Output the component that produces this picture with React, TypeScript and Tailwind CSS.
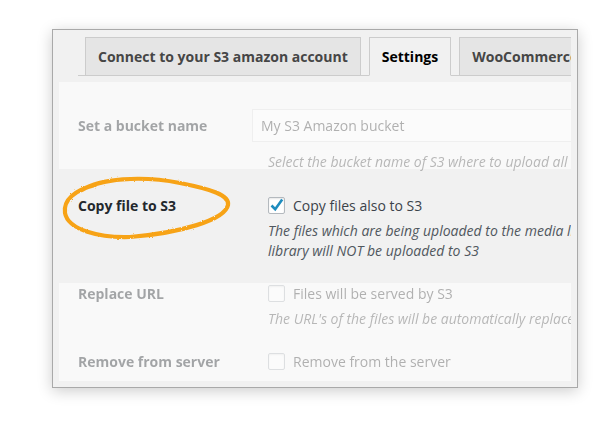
import React from 'react';

function Box({ checked }: { checked?: boolean }) {
  return (
    <span className="relative flex h-[17px] w-[17px] shrink-0 items-center justify-center rounded-[2px] border border-[#b4b9be] bg-white shadow-[inset_0_1px_2px_rgba(0,0,0,0.1)]">
      {checked && (
        <svg viewBox="0 0 17 17" className="absolute -left-px -top-px h-[17px] w-[17px]" fill="none">
          <path d="M3.5 8.5 L7.2 12.2 L14.2 2.6" stroke="#1e8cbe" strokeWidth="2.6" strokeLinejoin="miter" />
        </svg>
      )}
    </span>
  );
}

function Tab({ label, active }: { label: string; active?: boolean }) {
  return (
    <div
      className={
        'flex h-[39px] shrink-0 items-center border px-[12px] text-[14px] font-bold -mb-px ' +
        (active ? 'border-[#ccc] border-b-[#f1f1f1] bg-[#f1f1f1] text-black' : 'border-[#ccc] bg-[#e5e5e5] text-[#464646]')
      }
    >
      {label}
    </div>
  );
}

export default function App() {
  return (
    <div className="relative h-[429px] w-[600px] overflow-hidden bg-white pl-[52px] pt-[29px] font-['Open_Sans',sans-serif]">
      <div className="h-[359px] w-[526px] border border-[#a9a9a9] bg-[#f1f1f1] pb-[5px] pl-[6px] pr-[5px] shadow-[0_3px_14px_rgba(0,0,0,0.2)]">
        <div className="h-[351px] w-[512px] overflow-hidden">
          {/* tabs */}
          <div className="ml-[19px] flex h-[46px] items-end gap-[8px] whitespace-nowrap border-b border-[#ccc] pl-[7px] pt-[7px]">
            <Tab label="Connect to your S3 amazon account" />
            <Tab label="Settings" active />
            <Tab label="WooCommerce" />
          </div>

          <div className="mt-[6px]">
            {/* bucket name */}
            <div className="h-[87px] bg-[#f9f9f9]">
              <div className="flex pt-[27px] opacity-40">
                <div className="flex h-[33px] w-[209px] shrink-0 items-center pl-[19px] text-[14px] font-bold text-[#23282d]">
                  Set a bucket name
                </div>
                <div className="min-w-0">
                  <div className="-ml-[16px] flex h-[33px] w-[420px] items-center border border-[#e2e2e2] bg-white px-[8px] text-[14px] text-[#444]">
                    My S3 Amazon bucket
                  </div>
                  <p className="mt-[12px] whitespace-nowrap text-[14px] italic leading-[16px] text-[#555]">
                    Select the bucket name of S3 where to upload all images
                  </p>
                </div>
              </div>
            </div>

            {/* copy file */}
            <div className="flex h-[114px] pt-[28px]">
              <div className="flex h-[17px] w-[209px] shrink-0 items-center pl-[19px] text-[14px] font-bold text-[#23282d]">
                Copy file to S3
              </div>
              <div className="min-w-0">
                <label className="flex h-[17px] items-center gap-[8px] whitespace-nowrap text-[14px] text-[#3c434a]">
                  <Box checked />
                  Copy files also to S3
                </label>
                <p className="mt-[7px] whitespace-nowrap text-[14px] italic leading-[20px] text-[#50575e]">
                  <span className="block">The files which are being uploaded to the media library will also be copied to S3, otherwise the media</span>
                  <span className="block">library will NOT be uploaded to S3</span>
                </p>
              </div>
            </div>

            {/* replace url + remove */}
            <div className="h-[98px] bg-[#f9f9f9]">
              <div className="opacity-40">
                <div className="flex pt-[2px]">
                  <div className="flex h-[17px] w-[209px] shrink-0 items-center pl-[19px] text-[14px] font-bold text-[#23282d]">
                    Replace URL
                  </div>
                  <div className="min-w-0">
                    <label className="flex h-[17px] items-center gap-[8px] whitespace-nowrap text-[14px] text-[#444]">
                      <Box />
                      Files will be served by S3
                    </label>
                    <p className="mt-[7px] whitespace-nowrap text-[14px] italic leading-[20px] text-[#555]">
                      The URL's of the files will be automatically replaced by the S3 ones
                    </p>
                  </div>
                </div>
                <div className="mt-[24px] flex">
                  <div className="flex h-[17px] w-[209px] shrink-0 items-center pl-[19px] text-[14px] font-bold text-[#23282d]">
                    Remove from server
                  </div>
                  <label className="flex h-[17px] items-center gap-[8px] whitespace-nowrap text-[14px] text-[#444]">
                    <Box />
                    Remove from the server
                  </label>
                </div>
              </div>
            </div>
          </div>
        </div>
      </div>

      {/* hand-drawn highlight */}
      <svg className="pointer-events-none absolute left-[58px] top-[174px] h-[68px] w-[178px]" viewBox="0 0 178 68" fill="none">
        <defs>
          <filter id="rough" x="-10%" y="-10%" width="120%" height="120%">
            <feTurbulence type="fractalNoise" baseFrequency="0.9" numOctaves="2" seed="3" />
            <feDisplacementMap in="SourceGraphic" scale="2.2" />
          </filter>
        </defs>
        <path
          d="M24 16 C42 5 82 1 122 9 C152 15 172 21 170 31 C167 46 122 59 72 63 C42 64 10 56 7 39 C5 26 17 16 37 11"
          stroke="#f7a318"
          strokeWidth="4.2"
          strokeLinecap="round"
          filter="url(#rough)"
        />
      </svg>
    </div>
  );
}
